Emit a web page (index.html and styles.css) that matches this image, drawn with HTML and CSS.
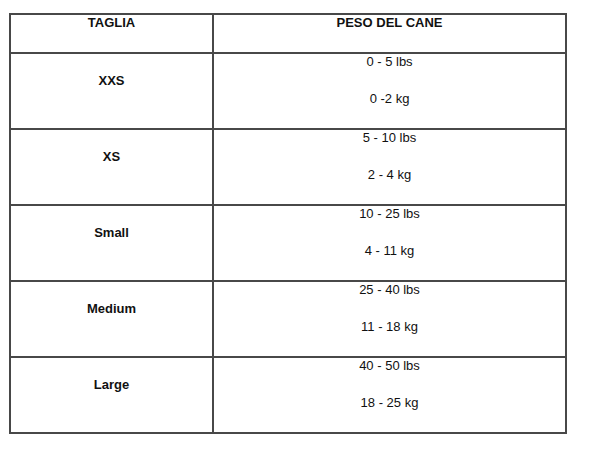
FILE: index.html
```html
<!DOCTYPE html>
<html lang="it">
<head>
<meta charset="utf-8">
<title>Taglie</title>
<link rel="stylesheet" href="styles.css">
</head>
<body>
<table class="size-table">
  <colgroup>
    <col class="col-size">
    <col class="col-weight">
  </colgroup>
  <tbody>
    <tr class="head-row">
      <td><p class="strong">TAGLIA</p></td>
      <td><p class="strong">PESO DEL CANE</p></td>
    </tr>
    <tr>
      <td><p class="strong">XXS</p></td>
      <td><p>0 - 5 lbs</p><p>0 -2 kg</p></td>
    </tr>
    <tr>
      <td><p class="strong">XS</p></td>
      <td><p>5 - 10 lbs</p><p>2 - 4 kg</p></td>
    </tr>
    <tr>
      <td><p class="strong">Small</p></td>
      <td><p>10 - 25 lbs</p><p>4 - 11 kg</p></td>
    </tr>
    <tr>
      <td><p class="strong">Medium</p></td>
      <td><p>25 - 40 lbs</p><p>11 - 18 kg</p></td>
    </tr>
    <tr>
      <td><p class="strong">Large</p></td>
      <td><p>40 - 50 lbs</p><p>18 - 25 kg</p></td>
    </tr>
  </tbody>
</table>
</body>
</html>
```

FILE: styles.css
```css
html, body {
  margin: 0;
  padding: 0;
  background: #fff;
}

body {
  padding: 13px 0 0 9px;
  font-family: "Liberation Sans", Arial, sans-serif;
  font-size: 13px;
  line-height: 15px;
  color: #111;
}

.size-table {
  border-collapse: collapse;
  table-layout: fixed;
  width: 556px;
  border: 2px solid #484848;
}

.col-size {
  width: 203px;
}

.col-weight {
  width: 353px;
}

.size-table td {
  border: 2px solid #484848;
  padding: 0 1px;
  text-align: center;
  vertical-align: middle;
}

.size-table p {
  margin: 0 0 22px;
}

.strong {
  font-weight: bold;
}
```
